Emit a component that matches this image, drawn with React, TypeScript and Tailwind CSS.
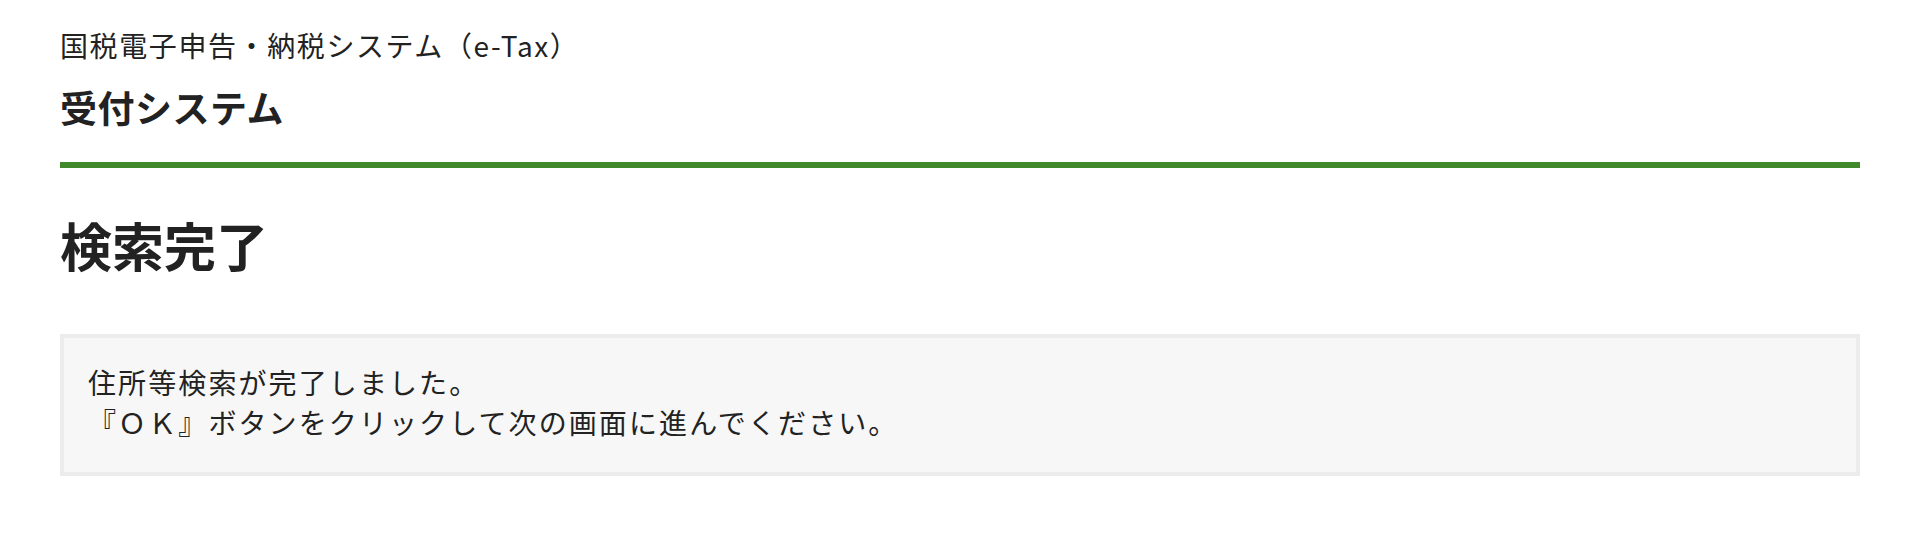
const font = { fontFamily: '"Noto Sans CJK JP", "Noto Sans", sans-serif' };

export default function App() {
  return (
    <div
      className="min-h-[550px] bg-white pl-[60px] pr-[46px] pt-[24px] text-[#222]"
      style={font}
    >
      <header>
        <p className="text-[28px] leading-[42px] tracking-[1.6px]">国税電子申告・納税システム（e-Tax）</p>
        <h1 className="mt-[16px] text-[37px] font-bold leading-[50px] tracking-[0.5px]">受付システム</h1>
        <div className="mt-[30px] h-[6px] bg-[#408a2b]" />
      </header>

      <main>
        <h2 className="mt-[47px] text-[52px] font-bold leading-[60px]">検索完了</h2>
        <div className="mt-[59px] border-4 border-[#ececec] bg-[#f7f7f7] pl-[24px] pr-[26px] pt-[24px] pb-[30px]">
          <p className="text-[28px] leading-[40px] tracking-[2.1px]">
            住所等検索が完了しました。
            <br />
            『ＯＫ』ボタンをクリックして次の画面に進んでください。
          </p>
        </div>
      </main>
    </div>
  );
}
